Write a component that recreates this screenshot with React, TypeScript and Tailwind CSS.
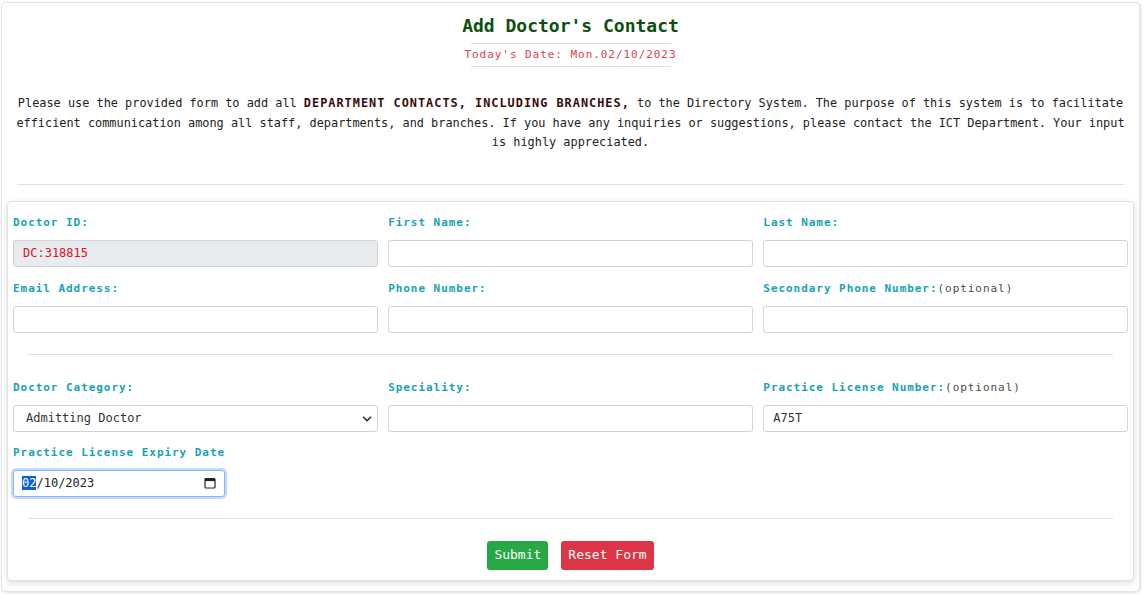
import { ChevronDown } from "lucide-react";

const fieldLabel =
  "block text-[11px] leading-[16px] font-bold tracking-[0.95px] text-[#17a2b8] mb-[9px]";
const fieldInput =
  "block w-full h-[27px] rounded-[3px] border border-[#ced4da] bg-white px-[9px] text-[12px] text-[#333] outline-none";

function Field({
  label,
  optional,
  value,
  readOnly,
}: {
  label: string;
  optional?: boolean;
  value?: string;
  readOnly?: boolean;
}) {
  return (
    <div>
      <label className={fieldLabel}>
        {label}
        {optional && (
          <span className="font-normal text-[#4a4a4a]">(optional)</span>
        )}
      </label>
      <input
        className={
          readOnly
            ? fieldInput + " !bg-[#e9ecef] !text-[#e0101e]"
            : fieldInput
        }
        defaultValue={value}
        readOnly={readOnly}
      />
    </div>
  );
}

function CalendarGlyph() {
  return (
    <svg width="12" height="12" viewBox="0 0 12 12" className="text-[#222]">
      <rect x="1" y="1.5" width="10" height="9.5" rx="1" fill="none" stroke="currentColor" strokeWidth="1.2" />
      <rect x="1" y="1.5" width="10" height="2.6" fill="currentColor" />
    </svg>
  );
}

export default function App() {
  return (
    <div className="min-h-screen bg-white pt-[2px] font-['DejaVu_Sans_Mono',monospace]">
      <div className="ml-[1px] w-[1139px] rounded-[5px] border border-[#e2e2ea] bg-white px-[5px] pt-[12px] pb-[10px] shadow-[1px_1px_3px_rgba(0,0,0,0.12)]">
        {/* Header */}
        <div className="text-center">
          <h1 className="text-[18px] leading-[22px] font-bold text-[#0c4f0c]">
            Add Doctor's Contact
          </h1>
          <div className="mx-auto mt-[6px] w-[200px] border-y border-[#dee2e6] py-[4px]">
            <div className="-mx-[8px] whitespace-nowrap text-[11px] leading-[14px] tracking-[0.95px] text-[#e0404f]">
              Today's Date: Mon.02/10/2023
            </div>
          </div>
        </div>

        <p className="mt-[27px] px-[2px] text-center text-[11.88px] leading-[19.5px] text-[#222]">
          Please use the provided form to add all{" "}
          <b className="tracking-[1px] text-[#3a0a0a]">
            DEPARTMENT CONTACTS, INCLUDING BRANCHES,
          </b>{" "}
          to the Directory System. The purpose of this system is to facilitate
          efficient communication among all staff, departments, and branches. If
          you have any inquiries or suggestions, please contact the ICT
          Department. Your input is highly appreciated.
        </p>

        <hr className="mx-[10px] mt-[31px] border-t border-[#e0e0e0]" />

        {/* Form card */}
        <form className="mt-[16px] rounded-[4px] border border-[#e0e0e0] bg-white px-[5px] pt-[13px] pb-[10px] shadow-[0_2px_6px_rgba(0,0,0,0.14)]">
          <div className="grid grid-cols-3 gap-x-[10.5px] gap-y-[14px]">
            <Field label="Doctor ID:" value="DC:318815" readOnly />
            <Field label="First Name:" />
            <Field label="Last Name:" />
            <Field label="Email Address:" />
            <Field label="Phone Number:" />
            <Field label="Secondary Phone Number:" optional />
          </div>

          <hr className="mx-[15px] mt-[21px] mb-[25px] border-t border-[#e0e0e0]" />

          <div className="grid grid-cols-3 gap-x-[10.5px] gap-y-[13px]">
            <div>
              <label className={fieldLabel}>Doctor Category:</label>
              <div className="relative">
                <select
                  className={fieldInput + " appearance-none pl-[12px] text-[11.5px]"}
                  defaultValue="Admitting Doctor"
                >
                  <option>Admitting Doctor</option>
                  <option>Consultant</option>
                  <option>Specialist</option>
                </select>
                <ChevronDown
                  size={14}
                  strokeWidth={3}
                  className="pointer-events-none absolute right-[4px] top-[7px] text-[#333]"
                />
              </div>
            </div>
            <Field label="Speciality:" />
            <Field label="Practice License Number:" optional value="A75T" />
            <div>
              <label className={fieldLabel}>Practice License Expiry Date</label>
              <div className="flex h-[27px] w-[212px] items-center justify-between rounded-[3px] border border-[#86b7fe] pl-[8px] pr-[8px] text-[12px] text-[#222] shadow-[0_0_0_2px_rgba(13,110,253,0.25)]">
                <span>
                  <span className="bg-[#0a64d6] text-white">02</span>/10/2023
                </span>
                <CalendarGlyph />
              </div>
            </div>
          </div>

          <hr className="mx-[15px] mt-[21px] border-t border-[#e0e0e0]" />

          <div className="mt-[22px] flex justify-center gap-[13px]">
            <button
              type="button"
              className="h-[29px] rounded-[3px] bg-[#28a745] px-[7px] text-[13px] text-white"
            >
              Submit
            </button>
            <button
              type="reset"
              className="h-[29px] rounded-[3px] bg-[#dc3545] px-[7px] text-[13px] text-white"
            >
              Reset Form
            </button>
          </div>
        </form>
      </div>
    </div>
  );
}
